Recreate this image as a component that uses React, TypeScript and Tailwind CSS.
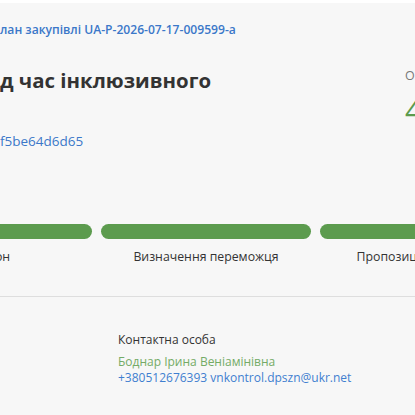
import React from "react";

const stages = ["Аукціон", "Визначення переможця", "Пропозиції розглянуто"];

export default function App() {
  return (
    <div className="w-[415px] h-[415px] overflow-hidden bg-[#f7f7f7] border-t-[3px] border-white font-['Open_Sans',sans-serif] text-[#333]">
      <div className="flex">
        <div className="w-[405px] shrink-0">
          <p className="mt-[18px] text-[12.1px] leading-[18px] font-semibold text-[#3b78c9] whitespace-nowrap">
            лан закупівлі UA-P-2026-07-17-009599-a
          </p>
          <h1 className="mt-[26px] text-[20.4px] leading-[30px] font-bold text-[#333] whitespace-nowrap">
            д час інклюзивного
          </h1>
          <p className="mt-[36px] text-[13.5px] leading-[20px] text-[#3b78c9] whitespace-nowrap">
            f5be64d6d65
          </p>
        </div>
        <div className="shrink-0 w-[200px]">
          <p className="mt-[64px] text-[12.5px] leading-[18px] text-[#777] whitespace-nowrap">
            Очікувана вартість
          </p>
          <p className="mt-[8px] text-[30px] leading-[34px] text-[#5c9b4e] whitespace-nowrap">
            4 000 UAH
          </p>
        </div>
      </div>

      <div className="mt-[73px] -ml-[118px] flex gap-[9px]">
        {stages.map((s) => (
          <div key={s} className="w-[210px] shrink-0 flex flex-col items-center">
            <div className="w-full h-[15px] rounded-full bg-[#5c9b4e]" />
            <p className="mt-[9px] text-[12.3px] leading-[18px] text-[#333] whitespace-nowrap">{s}</p>
          </div>
        ))}
      </div>

      <div className="mt-[30px] h-px bg-[#dedede] w-full" />

      <div className="pl-[118px]">
        <p className="mt-[34px] text-[12px] leading-[18px] text-[#333]">Контактна особа</p>
        <p className="mt-[5px] text-[12px] leading-[16px] text-[#74ab66]">Боднар Ірина Веніамінівна</p>
        <p className="text-[12px] leading-[16px] text-[#3f7fd0] whitespace-nowrap">
          +380512676393 vnkontrol.dpszn@ukr.net
        </p>
      </div>
    </div>
  );
}
